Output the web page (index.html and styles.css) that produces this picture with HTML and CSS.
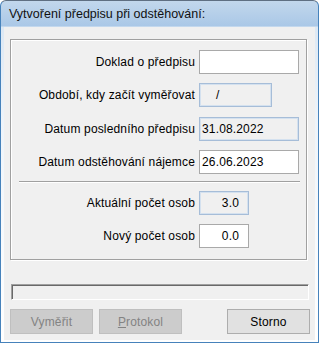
FILE: index.html
```html
<!DOCTYPE html>
<html lang="cs">
<head>
    <meta charset="UTF-8">
    <title>Vytvoření předpisu při odstěhování</title>
    <link rel="stylesheet" href="styles.css">
</head>
<body>
    <div class="window">
        <div class="titlebar">Vytvoření předpisu při odstěhování:</div>
        <div class="client">
            <!-- skupina s poli -->
            <div class="group">
                <div class="row">
                    <span class="label">Doklad o předpisu</span>
                    <div class="field"></div>
                </div>
                <div class="row">
                    <span class="label">Období, kdy začít vyměřovat</span>
                    <div class="field ro short"><span class="slash">/</span></div>
                </div>
                <div class="row row-wide">
                    <span class="label">Datum posledního předpisu</span>
                    <div class="field ro">31.08.2022</div>
                </div>
                <div class="row">
                    <span class="label">Datum odstěhování nájemce</span>
                    <div class="field">26.06.2023</div>
                </div>
                <div class="sep"></div>
                <div class="row row-first">
                    <span class="label">Aktuální počet osob</span>
                    <div class="field ro num">3.0</div>
                </div>
                <div class="row">
                    <span class="label">Nový počet osob</span>
                    <div class="field num">0.0</div>
                </div>
            </div>

            <div class="progress"></div>

            <div class="buttons">
                <button class="btn" disabled>Vyměřit</button>
                <button class="btn" disabled><u>P</u>rotokol</button>
                <button class="btn storno">Storno</button>
            </div>
        </div>
    </div>
</body>
</html>
```

FILE: styles.css
```css
body {
    margin: 0;
    background: #fff;
    font-family: "Liberation Sans", Arial, sans-serif;
    font-size: 12px;
    color: #000;
}
.window {
    width: 319px;
    height: 343px;
    box-sizing: border-box;
    border: 1px solid #4682bb;
    border-top-color: #5f6f82;
    border-radius: 6px 6px 0 0;
    padding: 0 3px 2px;
    display: flex;
    flex-direction: column;
    background: linear-gradient(to bottom, #c2d7ec 0, #aac8e7 25px, #dce8f4 26px, #eef4fa 120px, #fff 100%);
}
.titlebar {
    height: 26px;
    line-height: 27px;
    padding-left: 5px;
    font-size: 12.5px;
    color: #111;
}
.client {
    flex: 1;
    background: #f0f0f0;
    padding: 12px 0 0 6px;
    letter-spacing: 0.15px;
}
.group {
    width: 297px;
    height: 221px;
    box-sizing: border-box;
    border: 1px solid #a0a0a0;
    box-shadow: inset 1px 1px 0 #fff, 1px 1px 0 #fff;
    padding-top: 10px;
}
.row {
    display: flex;
    align-items: center;
    height: 24px;
    margin-top: 9px;
}
.row:first-child,
.row-first {
    margin-top: 0;
}
.row-wide {
    margin-top: 10px;
}
.label {
    width: 184px;
    margin-right: 4px;
    text-align: right;
}
.field {
    width: 100px;
    height: 24px;
    box-sizing: border-box;
    border: 1px solid #a9a9a9;
    background: #fff;
    padding: 0 2px;
    line-height: 22px;
}
.field.ro {
    background: #f0f0f0;
    border-color: #a6bdd8;
    box-shadow: inset 0 0 0 1px #d4e1ef;
}
.field.short {
    width: 73px;
}
.slash {
    padding-left: 14px;
}
.field.num {
    width: 50px;
    text-align: right;
    padding-right: 9px;
}
.sep {
    width: 281px;
    height: 1px;
    margin: 7px 0 8px 8px;
    background: #a0a0a0;
    border-bottom: 1px solid #fff;
}
.progress {
    width: 298px;
    height: 16px;
    box-sizing: border-box;
    margin: 24px 0 0 1px;
    border: 1px solid #fff;
    border-top-color: #a0a0a0;
    border-left-color: #a0a0a0;
    box-shadow: inset 1px 1px 0 #696969;
}
.buttons {
    display: flex;
    width: 300px;
    margin-top: 9px;
}
.btn {
    width: 83px;
    height: 25px;
    margin: 0 6px 0 0;
    padding: 0;
    box-sizing: border-box;
    border: 1px solid #adadad;
    background: #e1e1e1;
    font-family: inherit;
    font-size: 12px;
    letter-spacing: 0.15px;
    color: #000;
}
.btn:disabled {
    background: #cccccc;
    border-color: #bfbfbf;
    color: #838383;
}
.storno {
    margin: 0 0 0 auto;
}
```
